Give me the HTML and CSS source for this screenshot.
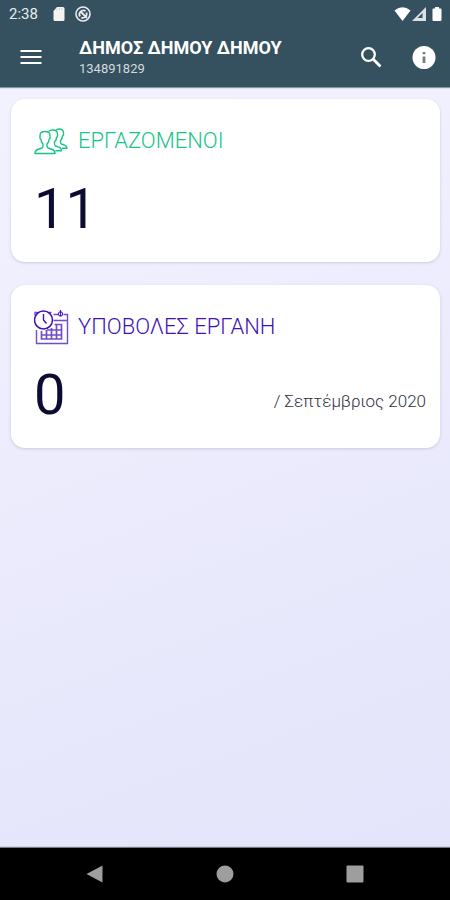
FILE: index.html
```html
<!DOCTYPE html>
<html lang="el">
<head>
<meta charset="utf-8">
<meta name="viewport" content="width=device-width, initial-scale=1">
<title>ΔΗΜΟΣ ΔΗΜΟΥ ΔΗΜΟΥ</title>
<link rel="stylesheet" href="styles.css">
</head>
<body>
<header class="top">
  <div class="status">
    <span class="clock">2:38</span>
    <svg class="status-icon" viewBox="0 0 16 16" aria-hidden="true"><path d="M6 1h6q1.500 0 1.500 1.500v11q0 1.500-1.500 1.500H4q-1.500 0-1.500-1.500V5z" fill="#f4f4f2"/><path d="M6 2.500v2M8.500 2v2M11 2v2" stroke="#cdd4d6"/></svg>
    <svg class="status-icon" viewBox="0 0 16 16" aria-hidden="true"><g fill="none" stroke="#e9edef"><circle cx="8" cy="8" r="7" stroke-width="1.600"/><path d="M5 10.500A4 4 0 0 1 10.500 5M11.500 6.500A4 4 0 0 1 6.300 11.600" stroke-width="1.800"/><path d="M6 6l6 6" stroke-width="1.800"/></g></svg>
    <svg class="signals" viewBox="0 0 50 16" aria-hidden="true"><path d="M.5 4.500Q8.500-2 16.500 4.500L8.500 15z" fill="#fff"/><path d="M32 1v14H18z" fill="#dce2e4"/><path d="M28.500 7v5h-5z" fill="#35515f"/><path d="M41 1h4v1.500h1.500q1 0 1 1V14q0 1-1 1h-7q-1 0-1-1V3.500q0-1 1-1H41z" fill="#fff"/></svg>
  </div>
  <div class="bar">
    <button class="icon-button" type="button" aria-label="Μενού"><svg viewBox="0 0 28 28"><path d="M3.500 7h21M3.500 13h21M3.500 19h21" stroke="#fff" stroke-width="2"/></svg></button>
    <div class="company">
      <h1 class="name">ΔΗΜΟΣ ΔΗΜΟΥ ΔΗΜΟΥ</h1>
      <p class="number">134891829</p>
    </div>
    <button class="icon-button" type="button" aria-label="Αναζήτηση"><svg viewBox="0 0 28 28"><circle cx="11.500" cy="10.500" r="6.300" fill="none" stroke="#fff" stroke-width="2.300"/><path d="M16 15l7.500 7.500" stroke="#fff" stroke-width="2.800"/></svg></button>
    <button class="icon-button" type="button" aria-label="Πληροφορίες"><svg viewBox="0 0 28 28"><circle cx="14" cy="13.500" r="11.500" fill="#fff"/><path d="M14 8v2.300M14 12.500v6.500" stroke="#747d82" stroke-width="2.800"/></svg></button>
  </div>
</header>
<main class="content">
  <section class="card">
    <div class="card-head employees">
      <svg class="card-icon" viewBox="0 0 36 36" aria-hidden="true"><g fill="none" stroke="currentColor" stroke-width="1.400" stroke-linejoin="round"><path d="M1 30.500q0-3 2.500-4l4.500-1.500q1-.5 1-2v-2l-1.500-2-.5-2.500-1-1v-3Q6 8.500 11 8.500t5 4v3l-1 1-.5 2.500-1.500 2v2q0 1.500 1 2l4.500 1.500q2.500 1 2.500 4z"/><path d="M14.500 8.500q1.500-1.500 4-1.500 5 0 5 4v2.500l-1 1-.5 2.500-1.500 2v2q0 1.500 1 2l3.500 1.200q2.500 1 2.500 3.500h-6"/><path d="M21.500 7.500q1.500-1.500 3.500-1.500 4.500 0 4.500 4v2l-1 1-.5 2.500-1.500 2v1.500q0 1.500 1 2l3 1.200q2.500 1 2.500 3h-5"/></g></svg>
      <h2 class="card-title">ΕΡΓΑΖΟΜΕΝΟΙ</h2>
    </div>
    <div class="card-foot"><span class="count">11</span></div>
  </section>
  <section class="card">
    <div class="card-head submissions">
      <svg class="card-icon" viewBox="1 0 36 36" aria-hidden="true"><g fill="none" stroke="currentColor"><circle cx="10.500" cy="11" r="9" stroke-width="1.500"/><path d="M10.500 5v6l3 3.500" stroke-width="1.400"/><path d="M2 6.500V3.500H5M15.500 3.500h3M20.500 5.500H25M30.500 5.500H34.500v29H3.500V21M20.500 11.500H34" stroke-width="1.400" stroke-opacity=".75"/><circle cx="27.500" cy="5" r="2.200"/><path d="M27.500 1v6" stroke-width="1.200"/><path d="M8.500 22v8H28.500V15.500h-7M8.500 26h20M14 21h14.500M13.500 21v9M18.500 19v11M23.500 15.500v14.500" stroke-width="1.700" stroke-opacity=".75"/></g></svg>
      <h2 class="card-title">ΥΠΟΒΟΛΕΣ ΕΡΓΑΝΗ</h2>
    </div>
    <div class="card-foot"><span class="count">0</span><span class="period">/ Σεπτέμβριος 2020</span></div>
  </section>
</main>
<nav class="system">
  <button class="system-button" type="button" aria-label="Πίσω"><svg viewBox="0 0 20 20"><path d="M17.500 1.500v17L1.500 10z"/></svg></button>
  <button class="system-button" type="button" aria-label="Αρχική"><svg viewBox="0 0 20 20"><circle cx="10" cy="10" r="8.500"/></svg></button>
  <button class="system-button" type="button" aria-label="Πρόσφατα"><svg viewBox="0 0 20 20"><rect x="1.500" y="1.500" width="17" height="17" rx="1"/></svg></button>
</nav>
</body>
</html>
```
FILE: styles.css
```css
* {
  box-sizing: border-box;
}

body {
  margin: 0;
  min-height: 100vh;
  display: flex;
  flex-direction: column;
  font-family: Roboto, "Liberation Sans", sans-serif;
  background: linear-gradient(160deg, #f4f4ff 0%, #ececfd 45%, #e3e3fa 100%);
}

h1, h2, p {
  margin: 0;
  font-weight: 400;
}

button {
  padding: 0;
  border: 0;
  background: none;
}

svg {
  display: block;
}

.top {
  background: #35515f;
  color: #fff;
  box-shadow: 0 1px 1px #8997a2;
}

.status {
  display: flex;
  align-items: center;
  gap: 8px;
  height: 28px;
  padding: 0 6px 0 9px;
}

.clock {
  margin-right: 5px;
  font-size: 15px;
  color: #e9edef;
}

.status-icon {
  width: 16px;
  height: 16px;
}

.signals {
  width: 50px;
  height: 16px;
  margin-left: auto;
}

.bar {
  display: flex;
  align-items: center;
  gap: 25px;
  height: 59px;
  padding: 0 12px 0 17px;
}

.icon-button,
.icon-button svg {
  width: 28px;
  height: 28px;
}

.company {
  flex: 1;
  padding-left: 9px;
  white-space: nowrap;
}

.name {
  font-size: 18px;
  line-height: 22px;
  font-weight: 700;
}

.number {
  font-size: 13px;
  line-height: 20px;
  color: #d3dadd;
}

.content {
  flex: 1;
  display: flex;
  flex-direction: column;
  gap: 23px;
  padding: 12px 10px 12px 11px;
}

.card {
  padding: 24px 14px 20px 23px;
  border-radius: 14px;
  background: #fff;
  box-shadow: 0 1px 3px #c9c9da;
}

.card-head {
  display: flex;
  align-items: center;
  gap: 8px;
}

.card-icon {
  width: 36px;
  height: 36px;
}

.card-title {
  font-size: 22px;
  line-height: 36px;
  font-weight: 300;
}

.employees {
  color: #18c486;
}

.submissions {
  color: #4012b8;
}

.card-foot {
  display: flex;
  align-items: center;
  justify-content: space-between;
  padding-top: 18px;
}

.count {
  font-size: 56px;
  line-height: 65px;
  color: #0c0b32;
}

.period {
  padding-top: 10px;
  font-size: 17px;
  font-weight: 300;
  color: #30303c;
}

.system {
  display: flex;
  align-items: center;
  justify-content: space-around;
  height: 52px;
  padding: 0 30px;
  background: #000;
  box-shadow: 0 -1px 1px #77777f;
}

.system-button,
.system-button svg {
  width: 20px;
  height: 20px;
  fill: #9e9e9e;
}
```
